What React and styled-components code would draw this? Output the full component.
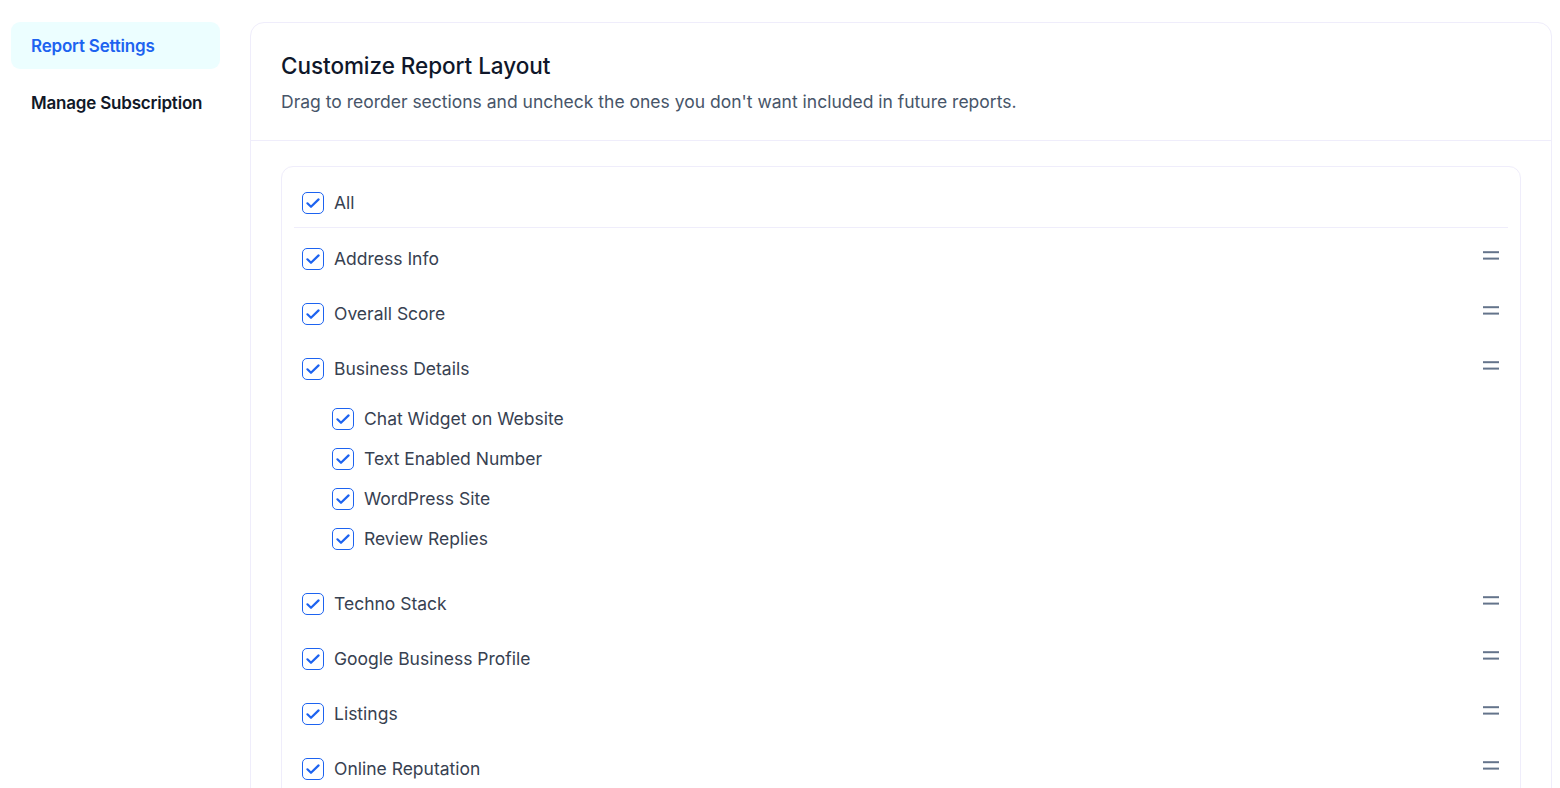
import React from 'react'
import styled, { createGlobalStyle } from 'styled-components'

const GlobalStyle = createGlobalStyle`
  body {
    margin: 0;
    background: #ffffff;
    font-family: Inter, 'Noto Sans', sans-serif;
    color: #0f172a;
  }
`

const Page = styled.div`
  display: flex;
  align-items: flex-start;
  gap: 30px;
  padding: 22px 8px 0 11px;
  height: 788px;
  box-sizing: border-box;
  overflow: hidden;
`

const Sidebar = styled.nav`
  width: 209px;
  flex-shrink: 0;
  display: flex;
  flex-direction: column;
  gap: 10px;
`

const NavItem = styled.div`
  height: 47px;
  display: flex;
  align-items: center;
  padding: 0 20px;
  border-radius: 9px;
  font-size: 17px;
  font-weight: 600;
  letter-spacing: -0.2px;
  white-space: nowrap;
  color: ${(p) => (p.active ? '#1d63f0' : '#111827')};
  background: ${(p) => (p.active ? '#ecfeff' : 'transparent')};
`

const Card = styled.section`
  flex: 1;
  border: 1px solid #efedfb;
  border-radius: 14px;
  background: #fff;
  min-height: 820px;
`

const CardHeader = styled.header`
  padding: 29px 30px 26px;
  border-bottom: 1px solid #efedfb;
  display: flex;
  flex-direction: column;
  gap: 10px;
`

const Title = styled.h2`
  margin: 0;
  font-size: 22.5px;
  line-height: 28px;
  font-weight: 500;
  color: #0f172a;
  letter-spacing: -0.05px;
`

const Subtitle = styled.p`
  margin: 0;
  font-size: 17.5px;
  line-height: 24px;
  color: #475569;
`

const CardBody = styled.div`
  padding: 25px 30px 0;
`

const SectionBox = styled.div`
  border: 1px solid #efedfb;
  border-radius: 12px;
  padding: 12px 12px 40px;
`

const AllRow = styled.div`
  display: flex;
  align-items: center;
  gap: 10px;
  padding: 12px 8px;
  border-bottom: 1px solid #efedfb;
`

const List = styled.div`
  display: flex;
  flex-direction: column;
  gap: 7px;
  padding-top: 7px;
`

const Item = styled.div`
  padding: 12px 8px ${(p) => (p.hasChildren ? '22px' : '12px')};
`

const ItemHead = styled.div`
  display: flex;
  align-items: center;
  gap: 10px;
`

const Label = styled.span`
  font-size: 17.5px;
  line-height: 24px;
  color: #374151;
  flex: 1;
`

const Children = styled.div`
  display: flex;
  flex-direction: column;
  gap: 16px;
  margin-top: 26px;
  padding-left: 30px;
`

const Box = styled.span`
  width: 22px;
  height: 22px;
  box-sizing: border-box;
  border: 1.5px solid #1d63f0;
  border-radius: 5px;
  display: inline-flex;
  align-items: center;
  justify-content: center;
  flex-shrink: 0;
  background: #fff;
`

const Handle = styled.svg`
  flex-shrink: 0;
  margin-top: -7px;
  margin-right: 1px;
`

const Check = () => (
  <Box>
    <svg width="16" height="16" viewBox="0 0 16 16" fill="none">
      <path
        d="M2.4 8.3l3.6 3.5 7.6-7.4"
        stroke="#1d63f0"
        strokeWidth="2.2"
        strokeLinecap="round"
        strokeLinejoin="round"
      />
    </svg>
  </Box>
)

const DragHandle = () => (
  <Handle width="16" height="12" viewBox="0 0 16 12">
    <line x1="0" y1="2.2" x2="16" y2="2.2" stroke="#64748b" strokeWidth="2" />
    <line x1="0" y1="8.6" x2="16" y2="8.6" stroke="#64748b" strokeWidth="2" />
  </Handle>
)

const sections = [
  { name: 'Address Info' },
  { name: 'Overall Score' },
  {
    name: 'Business Details',
    children: [
      'Chat Widget on Website',
      'Text Enabled Number',
      'WordPress Site',
      'Review Replies',
    ],
  },
  { name: 'Techno Stack' },
  { name: 'Google Business Profile' },
  { name: 'Listings' },
  { name: 'Online Reputation' },
]

const App = () => (
  <>
    <GlobalStyle />
    <Page>
      <Sidebar>
        <NavItem active>Report Settings</NavItem>
        <NavItem>Manage Subscription</NavItem>
      </Sidebar>
      <Card>
        <CardHeader>
          <Title>Customize Report Layout</Title>
          <Subtitle>
            Drag to reorder sections and uncheck the ones you don't want included in future reports.
          </Subtitle>
        </CardHeader>
        <CardBody>
          <SectionBox>
            <AllRow>
              <Check />
              <Label>All</Label>
            </AllRow>
            <List>
              {sections.map((s) => (
                <Item key={s.name} hasChildren={!!s.children}>
                  <ItemHead>
                    <Check />
                    <Label>{s.name}</Label>
                    <DragHandle />
                  </ItemHead>
                  {s.children && (
                    <Children>
                      {s.children.map((c) => (
                        <ItemHead key={c}>
                          <Check />
                          <Label>{c}</Label>
                        </ItemHead>
                      ))}
                    </Children>
                  )}
                </Item>
              ))}
            </List>
          </SectionBox>
        </CardBody>
      </Card>
    </Page>
  </>
)

export default App
